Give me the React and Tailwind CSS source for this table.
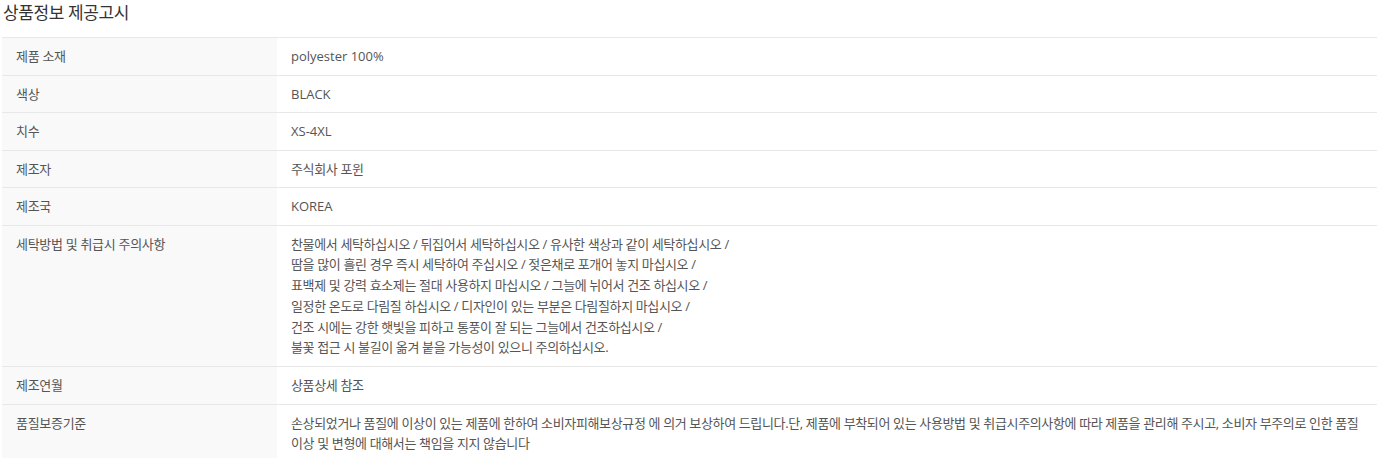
const rows = [
  { label: '제품 소재', value: ['polyester 100%'] },
  { label: '색상', value: ['BLACK'] },
  { label: '치수', value: ['XS-4XL'] },
  { label: '제조자', value: ['주식회사 포윈'] },
  { label: '제조국', value: ['KOREA'] },
  {
    label: '세탁방법 및 취급시 주의사항',
    value: [
      '찬물에서 세탁하십시오 / 뒤집어서 세탁하십시오 / 유사한 색상과 같이 세탁하십시오 /',
      '땀을 많이 흘린 경우 즉시 세탁하여 주십시오 / 젖은채로 포개어 놓지 마십시오 /',
      '표백제 및 강력 효소제는 절대 사용하지 마십시오 / 그늘에 뉘어서 건조 하십시오 /',
      '일정한 온도로 다림질 하십시오 / 디자인이 있는 부분은 다림질하지 마십시오 /',
      '건조 시에는 강한 햇빛을 피하고 통풍이 잘 되는 그늘에서 건조하십시오 /',
      '불꽃 접근 시 불길이 옮겨 붙을 가능성이 있으니 주의하십시오.',
    ],
  },
  { label: '제조연월', value: ['상품상세 참조'] },
  {
    label: '품질보증기준',
    value: [
      '손상되었거나 품질에 이상이 있는 제품에 한하여 소비자피해보상규정 에 의거 보상하여 드립니다.단, 제품에 부착되어 있는 사용방법 및 취급시주의사항에 따라 제품을 관리해 주시고, 소비자 부주의로 인한 품질 이상 및 변형에 대해서는 책임을 지지 않습니다',
    ],
  },
]

const hangul = /[\uac00-\ud7a3]/

export default function App() {
  return (
    <div
      className="w-[1382px] bg-white pl-[2px] pr-[5px] text-[#555]"
      style={{ fontFamily: '"Open Sans", "Noto Sans CJK KR", sans-serif' }}
    >
      <h2 className="text-[17px] leading-[26px] tracking-[-0.4px] text-[#333] pl-[1px] mb-[11px]">상품정보 제공고시</h2>

      <table className="w-full border-collapse border-t border-[#e8e8e8] text-[13px] leading-[20.5px]">
        <tbody>
          {rows.map((row) => (
            <tr key={row.label} className="border-b border-[#e8e8e8] align-top">
              <th className="w-[275px] bg-[#f9f9f9] px-[14px] py-[8px] text-left font-normal tracking-[-0.3px]">
                {row.label}
              </th>
              <td
                className={`pl-[14px] pr-[8px] py-[8px] break-keep ${row.value.length > 1 ? 'leading-[20.8px]' : ''} ${hangul.test(row.value[0]) ? 'tracking-[-0.36px]' : 'tracking-normal'}`}
              >
                {row.value.map((line, i) => (
                  <div key={i}>{line}</div>
                ))}
              </td>
            </tr>
          ))}
        </tbody>
      </table>
    </div>
  )
}
